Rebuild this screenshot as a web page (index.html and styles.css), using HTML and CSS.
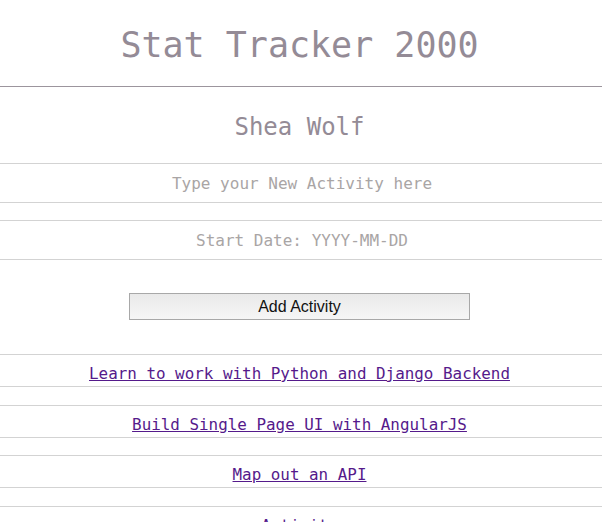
FILE: index.html
```html
<!DOCTYPE html>
<html lang="en">
<head>
<meta charset="utf-8">
<title>Stat Tracker 2000</title>
<link rel="stylesheet" href="styles.css">
</head>
<body>
  <header class="site-header">
    <h1 class="site-title">Stat Tracker 2000</h1>
  </header>
  <main class="page">
    <h2 class="user-name">Shea Wolf</h2>
    <form class="activity-form">
      <input class="field" type="text" placeholder="Type your New Activity here">
      <input class="field" type="text" placeholder="Start Date: YYYY-MM-DD">
      <button class="add-btn" type="button">Add Activity</button>
    </form>
    <ul class="activity-list">
      <li class="activity-item"><a class="activity-link" href="#">Learn to work with Python and Django Backend</a></li>
      <li class="activity-item"><a class="activity-link" href="#">Build Single Page UI with AngularJS</a></li>
      <li class="activity-item"><a class="activity-link" href="#">Map out an API</a></li>
      <li class="activity-item"><a class="activity-link" href="#">Activity</a></li>
    </ul>
  </main>
</body>
</html>
```

FILE: styles.css
```css
html, body {
  margin: 0;
  padding: 0;
  background: #ffffff;
}

body {
  font-family: "DejaVu Sans Mono", "Liberation Mono", monospace;
  color: #948b96;
}

.site-header {
  padding: 27px 3px 23px 0;
  border-bottom: 1px solid #9c959d;
  text-align: center;
}

.site-title {
  margin: 0;
  font-size: 35px;
  line-height: 36px;
  font-weight: normal;
  color: #948b96;
}

.page {
  display: flex;
  flex-direction: column;
}

.user-name {
  margin: 0;
  padding: 28px 3px 23px 0;
  font-size: 24px;
  line-height: 25px;
  font-weight: normal;
  text-align: center;
  color: #948b96;
}

.activity-form {
  display: flex;
  flex-direction: column;
  align-items: center;
  margin: 0;
  padding-right: 3px;
}

.field {
  box-sizing: border-box;
  width: calc(100% + 3px);
  height: 40px;
  margin: 0 -3px 17px 0;
  padding: 0 0 0 2px;
  border: none;
  border-top: 1px solid #d3d3d3;
  border-bottom: 1px solid #d3d3d3;
  font-family: "DejaVu Sans Mono", "Liberation Mono", monospace;
  font-size: 16px;
  text-align: center;
  color: #555;
  background: #fff;
  outline: none;
}

.field:last-of-type {
  margin-bottom: 0;
}

.field::placeholder {
  color: #a9a5a5;
}

.add-btn {
  box-sizing: border-box;
  width: 341px;
  height: 27px;
  margin: 33px 0 0;
  padding: 0;
  border: 1px solid #a8a8a8;
  border-radius: 0;
  background: linear-gradient(#e9e9e9, #f6f6f6);
  font-family: "Liberation Sans", Arial, sans-serif;
  font-size: 16px;
  color: #111;
}

.activity-list {
  list-style: none;
  margin: 34px 0 0;
  padding: 0;
  display: flex;
  flex-direction: column;
  row-gap: 17.5px;
}

.activity-item {
  box-sizing: border-box;
  height: 33px;
  padding: 11px 3px 4px 0;
  border-top: 1px solid #d3d3d3;
  border-bottom: 1px solid #d3d3d3;
  text-align: center;
  font-size: 15.9px;
  line-height: 16px;
}

.activity-link {
  color: #551a8b;
  text-decoration: underline;
}
```
